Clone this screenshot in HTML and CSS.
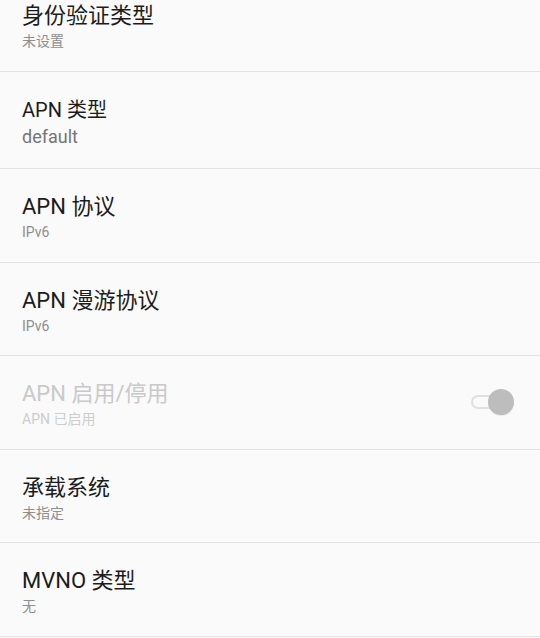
FILE: index.html
```html
<!DOCTYPE html>
<html lang="zh-CN">
<head>
<meta charset="utf-8">
<title>APN</title>
<link rel="stylesheet" href="styles.css">
</head>
<body>
<div class="list">
  <div class="row">
    <div class="text">
      <div class="title">身份验证类型</div>
      <div class="summary">未设置</div>
    </div>
  </div>
  <div class="row">
    <div class="text">
      <div class="title title-small">APN 类型</div>
      <div class="summary summary-large">default</div>
    </div>
  </div>
  <div class="row">
    <div class="text">
      <div class="title">APN 协议</div>
      <div class="summary">IPv6</div>
    </div>
  </div>
  <div class="row">
    <div class="text">
      <div class="title">APN 漫游协议</div>
      <div class="summary">IPv6</div>
    </div>
  </div>
  <div class="row row-disabled">
    <div class="text">
      <div class="title">APN 启用/停用</div>
      <div class="summary">APN 已启用</div>
    </div>
    <div class="switch">
      <div class="track"></div>
      <div class="thumb"></div>
    </div>
  </div>
  <div class="row">
    <div class="text">
      <div class="title">承载系统</div>
      <div class="summary">未指定</div>
    </div>
  </div>
  <div class="row">
    <div class="text">
      <div class="title">MVNO 类型</div>
      <div class="summary">无</div>
    </div>
  </div>
</div>
</body>
</html>
```
FILE: styles.css
```css
html, body {
  margin: 0;
  padding: 0;
  background: #fafafa;
  height: 100%;
  overflow: hidden;
}
body {
  font-family: Roboto, "Noto Sans CJK SC", sans-serif;
}
.list {
  margin-top: -22px;
  display: flex;
  flex-direction: column;
}
.row {
  display: flex;
  align-items: center;
  padding: 24px 26px 18.5px 22px;
  border-bottom: 1px solid #e2e2e2;
}
.text {
  flex: 1;
  min-width: 0;
}
.title {
  font-size: 22px;
  line-height: 28px;
  color: #1c1c1c;
}
.title-small {
  font-size: 20px;
}
.summary {
  font-size: 14px;
  line-height: 22px;
  color: #8e8e8e;
}
.summary-large {
  font-size: 18px;
  line-height: 26px;
  color: #757575;
}
.row-disabled .title {
  color: #c9c9c9;
}
.row-disabled .summary {
  color: #cdcdcd;
}
.switch {
  position: relative;
  width: 43px;
  height: 26px;
  margin-top: -6px;
}
.track {
  position: absolute;
  left: 0;
  top: 6px;
  width: 37px;
  height: 14px;
  box-sizing: border-box;
  border: 2px solid #e0e0e0;
  border-radius: 7px;
  background: #fafafa;
}
.thumb {
  position: absolute;
  right: 0;
  top: 0;
  width: 26px;
  height: 26px;
  border-radius: 50%;
  background: #bdbdbd;
  box-shadow: 0 1px 1px rgba(0,0,0,0.08);
}
```
